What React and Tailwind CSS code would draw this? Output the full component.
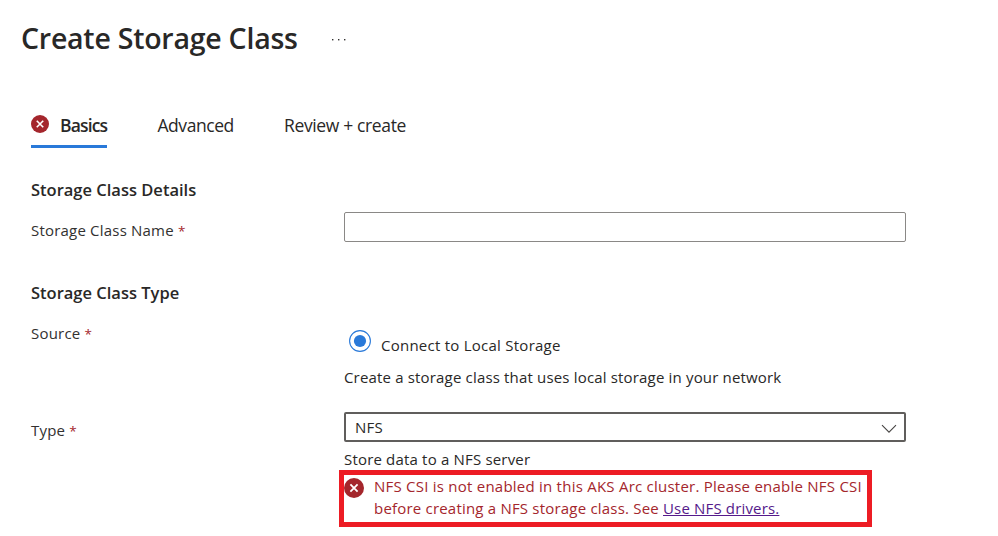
function ErrorIcon({ className }) {
  return (
    <svg viewBox="0 0 20 20" className={className} aria-hidden="true">
      <circle cx="10" cy="10" r="10" fill="#a4262c" />
      <path d="M6.4 6.4l7.2 7.2M13.6 6.4l-7.2 7.2" stroke="#fff" strokeWidth="1.8" />
    </svg>
  );
}

function Label({ children }) {
  return (
    <label className="block w-[313px] shrink-0 text-[15px] leading-5 tracking-[0.2px] text-[#323130]">
      {children} <span className="text-[13.5px] text-[#a4262c]">*</span>
    </label>
  );
}

export default function App() {
  return (
    <main className="h-[536px] w-[998px] overflow-hidden bg-white font-['Open_Sans','Noto_Sans',sans-serif] text-[#292827]">
      <header className="flex h-[76px] items-center pl-[21px]">
        <h1 className="-mt-px w-[310px] text-[28.5px] leading-9 font-semibold tracking-[-0.24px] whitespace-nowrap">
          Create Storage Class
        </h1>
        <svg viewBox="0 0 16 4" className="mt-[3px] h-1 w-4" fill="#323130" aria-hidden="true">
          <rect x="1" y="1" width="1.4" height="1.4" />
          <rect x="7" y="1" width="1.4" height="1.4" />
          <rect x="13" y="1" width="1.4" height="1.4" />
        </svg>
      </header>

      <nav className="mt-9 flex h-9 pl-[31px] text-[17.5px] leading-[26px] whitespace-nowrap">
        <div className="flex w-[76px] border-b-3 border-[#2979d9] font-semibold tracking-[-0.85px]">
          <ErrorIcon className="mt-[3px] -ml-[0.5px] mr-[11.5px] h-[18px] w-[18px] shrink-0" />
          <span>Basics</span>
        </div>
        <div className="ml-[50.5px] w-[76.5px] tracking-[-0.45px]">Advanced</div>
        <div className="ml-[50px] tracking-[-0.36px]">Review + create</div>
      </nav>

      <section className="mt-[30px] pl-[31px]">
        <h2 className="text-[16.5px] leading-6 font-semibold">Storage Class Details</h2>
        <div className="mt-[10px] flex h-[30px]">
          <div className="pt-2">
            <Label>Storage Class Name</Label>
          </div>
          <input className="h-[30px] w-[562px] rounded-xs border border-[#8a8886] outline-none" />
        </div>
      </section>

      <section className="mt-[39px] pl-[31px]">
        <h2 className="text-[16.5px] leading-6 font-semibold">Storage Class Type</h2>
        <div className="mt-[18px] flex h-[89px]">
          <Label>Source</Label>
          <div className="text-[15px] leading-5 tracking-[0.18px] whitespace-nowrap">
            <div className="flex pt-[7px] pl-[5px]">
              <svg viewBox="0 0 22 22" className="h-[22px] w-[22px]" aria-hidden="true">
                <circle cx="11" cy="11" r="10.4" fill="none" stroke="#2979d9" strokeWidth="1.1" />
                <circle cx="11" cy="11" r="6.1" fill="#2979d9" />
              </svg>
              <span className="mt-[5px] ml-[10px] tracking-[0.25px]">Connect to Local Storage</span>
            </div>
            <p className="mt-3 tracking-[0.17px]">Create a storage class that uses local storage in your network</p>
          </div>
        </div>
        <div className="flex">
          <div className="pt-2">
            <Label>Type</Label>
          </div>
          <div className="text-[15px] leading-5 tracking-[0.18px] whitespace-nowrap">
            <div className="flex h-[30px] w-[562px] items-center justify-between rounded-xs border-2 border-[#605e5c] pr-[7px] pl-[9px]">
              <span>NFS</span>
              <svg viewBox="0 0 16 10" className="mt-[3px] h-[10px] w-4" fill="none" stroke="#484644" aria-hidden="true">
                <path d="M1 1.2l7 7 7-7" strokeWidth="1.1" />
              </svg>
            </div>
            <p className="mt-[7px] mb-px">Store data to a NFS server</p>
            <div className="-ml-[5px] flex h-[57px] w-[533px] border-5 border-[#ed1c24] text-[#a4262c]">
              <ErrorIcon className="mt-[3px] mr-[10.5px] -ml-[0.5px] h-5 w-5 shrink-0" />
              <p className="leading-[22px]">
                <span className="tracking-[0.235px]">
                  NFS CSI is not enabled in this AKS Arc cluster. Please enable NFS CSI
                </span>
                <br />
                <span className="tracking-[0.2px]">before creating a NFS storage class. See </span>
                <a className="tracking-[0.16px] text-[#551a8b] underline">Use NFS drivers.</a>
              </p>
            </div>
          </div>
        </div>
      </section>
    </main>
  );
}
